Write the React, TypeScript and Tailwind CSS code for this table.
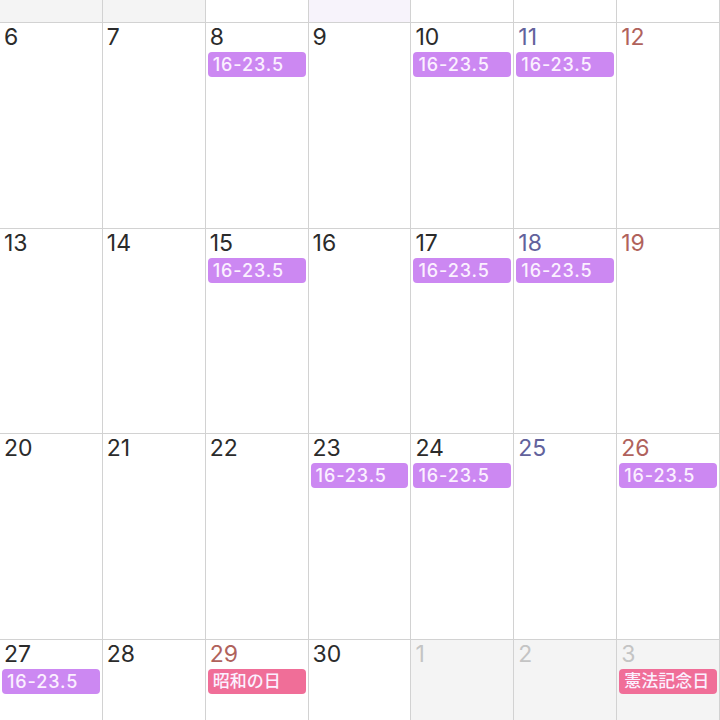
import React from "react";

type Cell = {
  d?: number;
  kind?: "prev" | "next" | "today";
  color?: "sat" | "sun";
  ev?: { text: string; type: "work" | "holiday" };
};

const W = { text: "16-23.5", type: "work" as const };

const rows: Cell[][] = [
  [
    { kind: "prev" },
    { kind: "prev" },
    {},
    { kind: "today" },
    {},
    {},
    {},
  ],
  [
    { d: 6 },
    { d: 7 },
    { d: 8, ev: W },
    { d: 9 },
    { d: 10, ev: W },
    { d: 11, color: "sat", ev: W },
    { d: 12, color: "sun" },
  ],
  [
    { d: 13 },
    { d: 14 },
    { d: 15, ev: W },
    { d: 16 },
    { d: 17, ev: W },
    { d: 18, color: "sat", ev: W },
    { d: 19, color: "sun" },
  ],
  [
    { d: 20 },
    { d: 21 },
    { d: 22 },
    { d: 23, ev: W },
    { d: 24, ev: W },
    { d: 25, color: "sat" },
    { d: 26, color: "sun", ev: W },
  ],
  [
    { d: 27, ev: W },
    { d: 28 },
    { d: 29, color: "sun", ev: { text: "昭和の日", type: "holiday" } },
    { d: 30 },
    { d: 1, kind: "next" },
    { d: 2, kind: "next" },
    { d: 3, kind: "next", ev: { text: "憲法記念日", type: "holiday" } },
  ],
];

function DayCell({ c, first }: { c: Cell; first: boolean }) {
  const bg =
    c.kind === "prev" || c.kind === "next"
      ? "bg-[#f4f4f4]"
      : c.kind === "today"
      ? "bg-[#f7f3fb]"
      : "bg-white";
  const numColor =
    c.kind === "prev" || c.kind === "next"
      ? "text-[#c4c4c4]"
      : c.color === "sat"
      ? "text-[#62629c]"
      : c.color === "sun"
      ? "text-[#b0625c]"
      : "text-[#2b2b2b]";
  return (
    <div
      className={`${
        first ? "h-[22.75px]" : "h-[205.75px]"
      } border-r border-b border-[#d2d2d2] ${bg} flex flex-col overflow-hidden`}
    >
      {c.d !== undefined && (
        <div
          className={`pl-[4px] pt-[1px] text-[23px] leading-[26px] ${numColor}`}
          style={{ fontFamily: "Inter, 'Liberation Sans', sans-serif" }}
        >
          {c.d}
        </div>
      )}
      {c.ev && (
        <div
          className={`mt-[2px] ml-[2px] mr-[2px] h-[25px] rounded-[4px] px-[5px] flex items-center text-[#fbf0ff] whitespace-nowrap ${
            c.ev.type === "work"
              ? "bg-[#cc88f2] text-[18px] font-medium tracking-[0.9px]"
              : "bg-[#f06e98] text-[17px] font-medium"
          }`}
          style={{
            fontFamily:
              "Inter, 'Noto Sans CJK JP', 'Liberation Sans', sans-serif",
          }}
        >
          {c.ev.text}
        </div>
      )}
    </div>
  );
}

export default function App() {
  return (
    <div className="w-[720px] h-[720px] overflow-hidden bg-white">
      <div className="grid grid-cols-7">
        {rows.flat().map((c, i) => (
          <DayCell key={i} c={c} first={i < 7} />
        ))}
      </div>
    </div>
  );
}
